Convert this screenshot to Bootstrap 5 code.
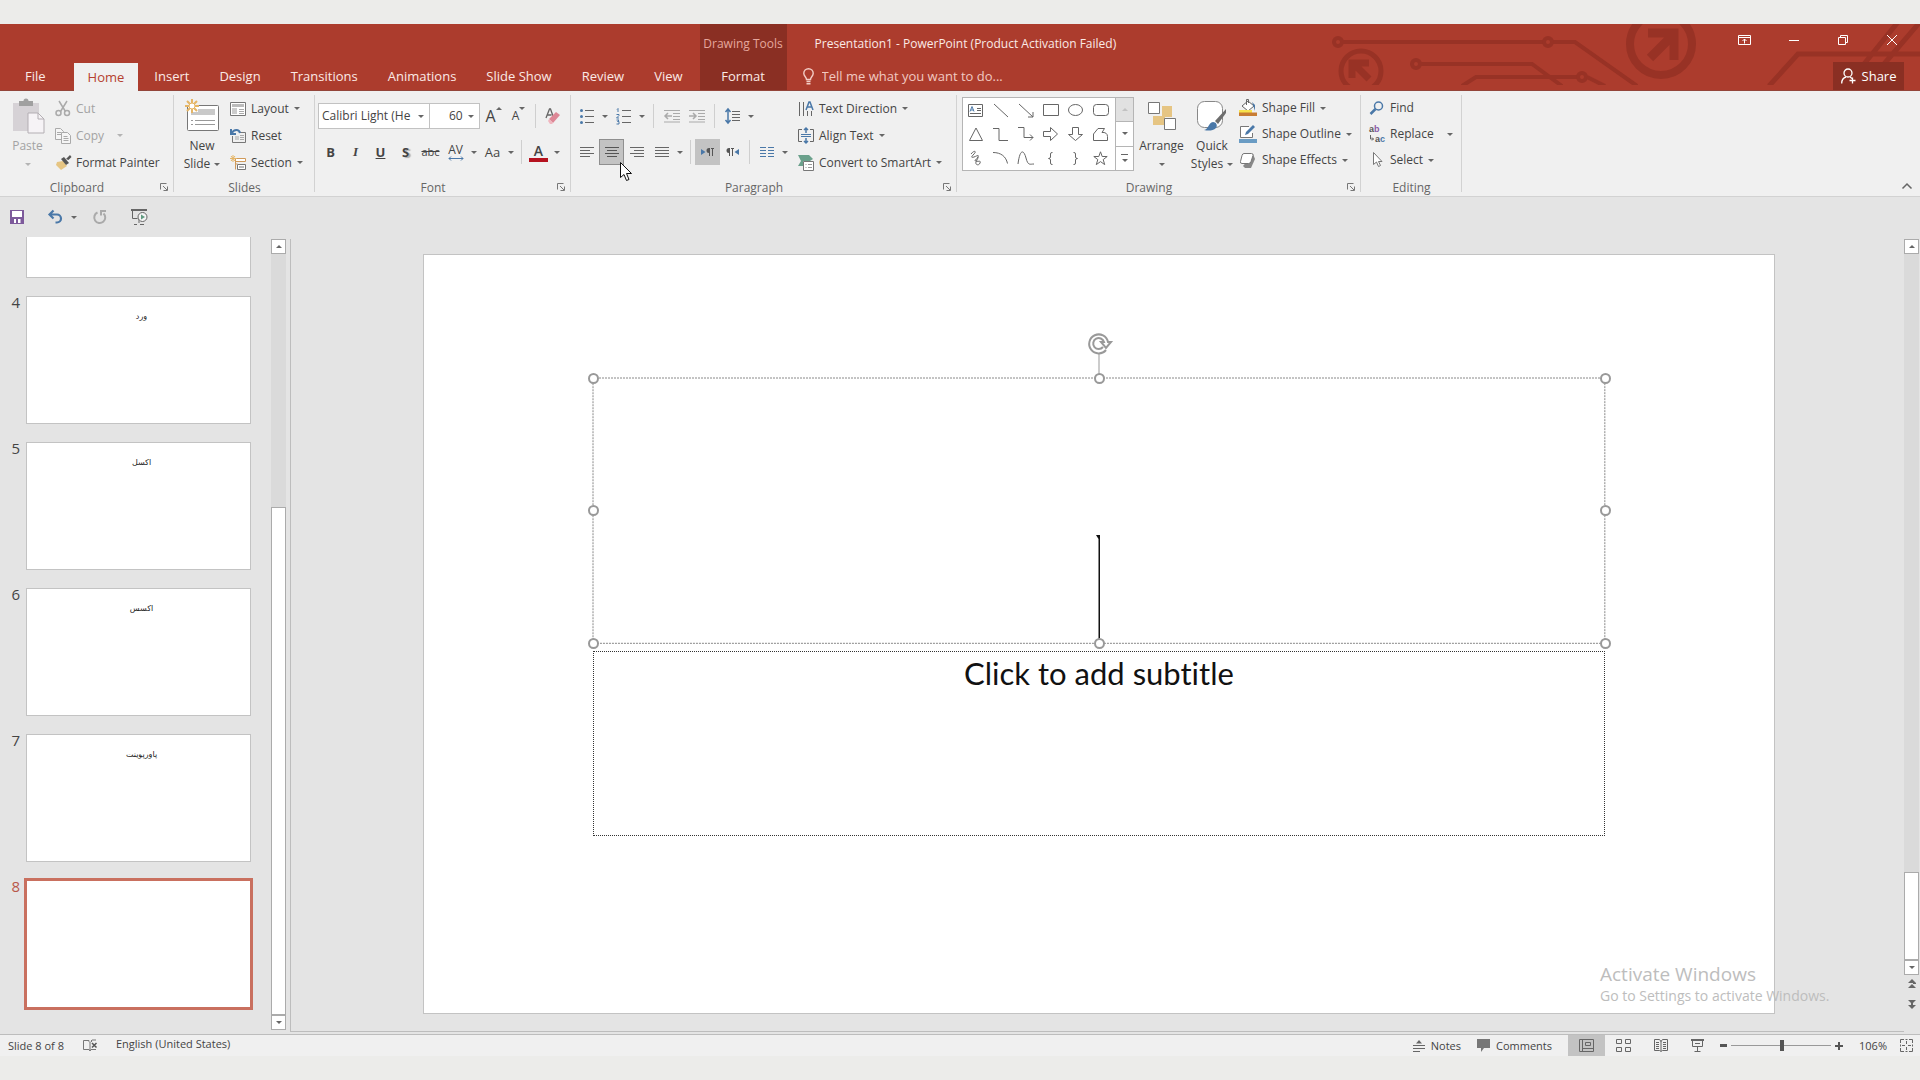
<!DOCTYPE html>
<html lang="en">
<head>
<meta charset="utf-8">
<meta name="viewport" content="width=device-width, initial-scale=1">
<title>Presentation1 - PowerPoint</title>
<link href="https://cdn.jsdelivr.net/npm/bootstrap@5.3.0/dist/css/bootstrap.min.css" rel="stylesheet">
<style>
:root{--brand:#ac3c2d;--brand-dark:#8a2f23;--art:#983225;--ink:#444;--line:#d2d2d2;--panel:#e4e4e4}
body{font-family:"Open Sans","Noto Sans",sans-serif;font-size:12px;line-height:16px;color:var(--ink);background:#ececea;overflow:hidden}
.app{height:100vh;padding:24px 0}
.titlebar,.ribbon,.qat,.status{flex:none}
svg{display:block;flex:none;overflow:visible}
a{color:inherit;text-decoration:none}
.rbtn{--bs-btn-padding-x:0;--bs-btn-padding-y:0;--bs-btn-font-size:12px;--bs-btn-line-height:18px;--bs-btn-border-width:0;--bs-btn-border-radius:0;--bs-btn-color:var(--ink);--bs-btn-disabled-color:#a3a3a3;--bs-btn-disabled-opacity:1;display:flex;align-items:center;font-family:inherit;white-space:nowrap}
.tri{display:inline-block;border:3px solid transparent;border-top-color:#666;border-bottom-width:0;flex:none}
.tri.up{border-top-width:0;border-bottom:3px solid #666}
.tri.dim{border-top-color:#b4b4b4}

/* title bar */
.titlebar{background:var(--brand);color:#fbeae6;height:67px;border-bottom:1px solid #93453a}
.titlebar .art{right:0;top:0}
.tabs{font-size:13px;line-height:28px;padding-right:2px}
.tabs a{padding:0 15px}
.tabs a.file-tab{padding:0 28px 0 25px}
.tabs a.on{background:#f0f0f0;color:#b5402f;padding:0 14px;margin:0 1px -1px 0}
.ctx{background:var(--brand-dark);width:87px;text-align:center}
.ctx-name{color:#e6a79d;line-height:39px}
.ctx-tab{font-size:13px;line-height:27px}
.doc-title{line-height:39px;height:38px;padding-left:28px}
.tell{line-height:28px;padding-left:16px;gap:8px;color:#f3cdc6}
.tell input{background:none;border:0;outline:0;padding:0;color:inherit;font-size:13px;width:220px}
.tell input::placeholder{color:#f1c9c1;opacity:1}
.wbtn{width:49px;height:32px;justify-content:center}
.share{background:var(--brand-dark);height:28px;width:71px;gap:6px;margin-right:16px;--bs-btn-color:#fff;--bs-btn-font-size:13px;justify-content:center}

/* ribbon */
.ribbon{background:#f0f0f0;height:106px;padding-top:4px;border-bottom:1px solid var(--line)}
.grp{position:relative;flex:none}
.grp::after{content:"";position:absolute;right:0;top:0;bottom:4px;width:1px;background:var(--line)}
.grp-body{height:85px}
.grp-foot{height:16px;text-align:center;color:#666;padding-right:20px}
.grp-foot.full{padding-right:0}
.launch{position:absolute;right:6px;bottom:5px}
.g-clip{width:174px}.g-slides{width:141px}.g-font{width:256px}.g-para{width:386px}.g-draw{width:404px}.g-edit{width:101px}
.stack .rbtn{height:27px;gap:5px}
.stack.tight .rbtn{height:26px}
.big{flex-direction:column}
.big .pic{height:42px;display:flex;align-items:center;justify-content:center}
.w-paste{width:55px}.w-new{width:56px}.w-arr{width:55px}.w-quick{width:46px}
.rows{padding:8px 0 0 3px}
.rows>div{height:26px;margin-bottom:10px}
.rows.para{width:227px}
.ic{width:25px;height:26px;justify-content:center}
.dd{width:12px;height:26px;justify-content:center}
.vsep{width:1px;height:24px;background:#cfcfcf;margin:0 4px}
.roomy .vsep{margin:0 5px}
.pressed{background:#c3c3c3}
.pressed.ring{box-shadow:inset 0 0 0 1px #8f8f8f}
.pick{appearance:none;border:1px solid #c2c2c2;border-radius:0;height:26px;font-size:12px;color:#444;padding:0 0 0 3px;background:#fff url("data:image/svg+xml,%3Csvg xmlns='http://www.w3.org/2000/svg' width='6' height='3'%3E%3Cpath d='M0 0h6L3 3z' fill='%23666'/%3E%3C/svg%3E") no-repeat right 5px center}
.pick.face{width:112px}.pick.size{width:51px;margin:0 1px 0 -1px;padding-left:19px}
.glyph{font-weight:700;font-size:13px}
.gallery{border:1px solid #b5b5b5;background:#fff;height:74px;margin:2px 0 0 5px}
.gallery .cells{display:grid;grid-template-columns:repeat(6,25px);grid-auto-rows:24px;padding-right:2px}
.gallery .cells .rbtn{justify-content:center}
.gallery .nav-col{width:18px;border-left:1px solid #b5b5b5}
.gallery .nav-col .rbtn{justify-content:center;flex:1}
.gallery .nav-col .rbtn+.rbtn{border-top:1px solid #b5b5b5}
.swap{font:600 9px "Liberation Sans",sans-serif}

/* workspace */
.qat{background:var(--panel);height:40px;padding-left:10px}
.work{background:var(--panel);min-height:0}
.thumbs{width:271px;overflow:hidden;justify-content:flex-end;padding-bottom:26px;gap:18px}
.thumb-row{flex:none}
.thumb-no{width:26px;padding:0 6px 0 0;text-align:right;font-size:15px;line-height:12px}
.thumb{width:225px;height:128px;background:#fff;border:1px solid #c3c3c3;text-align:center;font-family:"DejaVu Sans",sans-serif;font-size:8px;line-height:12px;color:#222;padding:14px 0 0 6px;flex:none}
.current .thumb{outline:3px solid #c9705f;outline-offset:-1px;border-color:#fff}
.current .thumb-no{color:#b85749}
.vbar{width:15px;margin-top:2px}
.vbar.at-edge{margin-right:1px}
.vbar .sb{width:15px;height:15px;border:1px solid #ababab;background:#fff;justify-content:center}
.vbar .track{background:#dadada}
.vbar .knob{background:#fff;border:1px solid #ababab}
.pager{height:59px}
.split{width:1px;background:#bdbdbd;margin:2px 0 2px 4px}
.stage{padding:17px 0 17px 3px;border-bottom:1px solid #bdbdbd;margin-bottom:2px;min-width:0}
.slide{height:100%;aspect-ratio:16/9;background:#fff;border:1px solid #c3c3c3;position:relative}
.ph{position:absolute;left:12.5%;width:75%}
.ph-title{top:16.2%;height:35%}
.ph-title .edge{position:absolute;inset:0;width:100%;height:100%}
.ph-sub{top:52.3%;height:24.4%;border:1px dotted #333;text-align:center;font-family:Lato,sans-serif;font-size:31px;line-height:42px;font-variant-ligatures:none;color:#111}
.knot{position:absolute;width:11px;height:11px;margin:-5px;border:2px solid #999;border-radius:50%;background:#fff}
.l{left:0}.c{left:50%}.r{left:100%}.t{top:0}.m{top:50%}.b{top:100%}
.rotor{position:absolute;left:50%;top:-46px;margin-left:-11px}
.beam{position:absolute;left:50%;bottom:0;margin-left:-3px}
.watermark{position:absolute;left:1600px;bottom:73px;color:#bdbdbd;font-size:14px;line-height:22px;pointer-events:none}
.watermark div:first-child{font-size:19px}
.pointer{position:absolute;left:620px;top:162px;pointer-events:none}

/* status bar */
.status{background:#f0f0f0;height:22px;border-top:1px solid #bdbdbd;font-size:11px;line-height:18px}
.status .rbtn{--bs-btn-font-size:11px;height:21px;gap:6px}
.status .lang{gap:18px;margin-left:19px}
.status .fit{margin:0 7px 0 13px}
.view{width:37px;justify-content:center}
.zoom{appearance:none;width:100px;height:16px;background:linear-gradient(#999,#999) center/100% 1px no-repeat;margin:0 4px}
.zoom::-webkit-slider-thumb{appearance:none;width:4px;height:11px;background:#555}
</style>
</head>
<body>
<div class="app d-flex flex-column">

<header class="titlebar d-flex position-relative">
  <svg class="art position-absolute overflow-hidden" width="600" height="61" viewBox="1320 24 600 61" fill="none" stroke="#983225" stroke-width="4">
    <circle cx="1338" cy="42" r="4"/><path d="M1343 42h200M1553 42h22l62 44"/><circle cx="1548" cy="42" r="4"/>
    <circle cx="1416" cy="64" r="4"/><path d="M1421 64h111l30 22M1462 86l14-9h101"/><circle cx="1582" cy="77" r="4"/><path d="M1587 77l18 9"/>
    <circle cx="1361" cy="71" r="20" stroke-width="5"/><path d="M1369 79l-13-13M1352 78v-15h17" stroke-width="7"/>
    <circle cx="1661" cy="44" r="31" stroke-width="8"/><path d="M1650 58l20-20M1648 33h26v27" stroke-width="9"/>
    <path d="M1769 86l29-32h122M1864 64l34-42M1884 64l36-42" stroke-width="5"/>
  </svg>
  <nav class="tabs d-flex align-items-end">
    <a class="file-tab" href="#">File</a><a class="on" href="#">Home</a><a href="#">Insert</a><a href="#">Design</a><a href="#">Transitions</a><a href="#">Animations</a><a href="#">Slide Show</a><a href="#">Review</a><a href="#">View</a>
  </nav>
  <div class="ctx d-flex flex-column">
    <div class="ctx-name">Drawing Tools</div>
    <a class="ctx-tab" href="#">Format</a>
  </div>
  <div class="flex-grow-1">
    <div class="doc-title">Presentation1 - PowerPoint (Product Activation Failed)</div>
    <label class="tell d-flex align-items-center">
      <svg width="11" height="17" viewBox="0 0 11 17" fill="none" stroke="#f3cdc6" stroke-width="1.4"><path d="M3.5 11.5C3.5 9 .8 8.400.8 5.200A4.700 4.500 0 0 1 10.200 5.200C10.200 8.400 7.500 9 7.500 11.500zM3.500 13.500h4M3.500 15.800h4"/></svg>
      <input type="text" placeholder="Tell me what you want to do..." aria-label="Tell me what you want to do">
    </label>
  </div>
  <div class="position-relative d-flex flex-column align-items-end justify-content-between">
    <div class="d-flex">
      <button class="btn rbtn wbtn" aria-label="Ribbon display options"><svg width="13" height="10" fill="none" stroke="#fff" stroke-width="1"><path d="M.5.5h12v9H.5zM.5 2.500h12M6.500 8.500v-4.500M4.500 6l2-2 2 2"/></svg></button>
      <button class="btn rbtn wbtn" aria-label="Minimize"><svg width="10" height="10" stroke="#fff"><path d="M0 5.500h10"/></svg></button>
      <button class="btn rbtn wbtn" aria-label="Restore"><svg width="10" height="10" fill="none" stroke="#fff"><path d="M.5 2.500h7v7h-7zM2.500 2.500v-2h7v7h-2"/></svg></button>
      <button class="btn rbtn wbtn me-1" aria-label="Close"><svg width="10" height="10" stroke="#fff"><path d="M0 0l10 10M10 0L0 10"/></svg></button>
    </div>
    <button class="btn rbtn share"><svg width="15" height="16" fill="none" stroke="#fff" stroke-width="1.300"><circle cx="7" cy="5" r="4"/><path d="M.7 15.500C.7 11.500 3 9.500 5 9M9 9l2 1.500M11.500 9.500v6M8.500 12.500h6"/></svg>Share</button>
  </div>
</header>

<section class="ribbon d-flex position-relative">
  <div class="grp g-clip">
    <div class="grp-body d-flex">
      <button class="btn rbtn big w-paste" disabled>
        <span class="pic"><svg width="32" height="36" viewBox="0 0 32 36"><path d="M1 5h26v28H1z" fill="#d6d2d6"/><path d="M7 8V3h4.500a2.500 2.500 0 0 1 5 0H21v5z" fill="#a0a0a0"/><path d="M16 15h10l6 6v14H16z" fill="#f6f3f6" stroke="#b3aeb3"/><path d="M26 15v6h6" fill="none" stroke="#b3aeb3"/></svg></span>
        Paste<span class="tri dim mt-2"></span>
      </button>
      <div class="stack">
        <button class="btn rbtn" disabled><svg width="16" height="16" fill="none" stroke="#aaa" stroke-width="1.500"><path d="M4 0l6.500 10.500M12 0L5.500 10.500"/><circle cx="3.500" cy="12" r="2.500"/><circle cx="12" cy="12" r="2.500"/></svg>Cut</button>
        <button class="btn rbtn" disabled><svg width="16" height="16" fill="#f5f5f5" stroke="#aaa"><path d="M.5.500h5l3 3v8h-8zM2 4.500h4M2 6.500h5"/><path d="M6.500 4.500h6l3 3v8h-9zM8.500 8.500h4M8.500 10.500h5M8.500 12.500h5"/></svg>Copy<span class="tri dim ms-2"></span></button>
        <button class="btn rbtn"><svg width="16" height="16"><path d="M2 7l6-1 4 5-6 4-2-2-3-3z" fill="#e6c583"/><path d="M6 4l3-2 5 6-3 2z" fill="#555"/><path d="M11 4l4-4 1.500 2-3 3z" fill="#555"/></svg>Format Painter</button>
      </div>
    </div>
    <div class="grp-foot">Clipboard</div>
    <svg class="launch" width="8" height="8" fill="none" stroke="#777"><path d="M.5 6.500v-6h6M3 3l4 4M7.500 3.500v4h-4"/></svg>
  </div>

  <div class="grp g-slides">
    <div class="grp-body d-flex">
      <button class="btn rbtn big w-new">
        <span class="pic"><svg width="34" height="34" viewBox="0 0 34 34"><rect x="2.500" y="6.500" width="31" height="25" rx="1" fill="#fff" stroke="#777"/><path d="M13 10h17v6H6v-3h7z" fill="#c9c9c9"/><path d="M6 21.500h2M10 21.500h20M6 25.500h2M10 25.500h20" stroke="#999"/><path d="M7 0v14M0 7h14M2 2l10 10M12 2L2 12" stroke="#e5b565" stroke-width="2"/><circle cx="7" cy="7" r="3" fill="#fff" stroke="#e5b565"/></svg></span>
        New<span class="d-flex align-items-center gap-1">Slide<span class="tri"></span></span>
      </button>
      <div class="stack">
        <button class="btn rbtn"><svg width="16" height="14" fill="#fff" stroke="#777"><path d="M.5.500h15v13H.5z"/><path d="M2 3.500h12" stroke="#bbb" stroke-width="3"/><path d="M2 6h5v6H2z" fill="#ccc" stroke="none"/><path d="M9 7.500h5M9 9.500h5M9 11.500h5" stroke="#aaa"/></svg>Layout<span class="tri"></span></button>
        <button class="btn rbtn"><svg width="16" height="16" fill="none" stroke="#777"><path d="M9 4.500h6.500v10h-13V8"/><path d="M5 8h4v4H5z" fill="#ccc" stroke="none"/><path d="M10 7.500h4M10 9.500h4M10 11.500h4" stroke="#aaa"/><path d="M1 1v5h5M1.500 5.500C4 1 9 1 10 5" stroke="#4a78a8" stroke-width="2"/></svg>Reset</button>
        <button class="btn rbtn"><svg width="16" height="16" fill="#fff" stroke="#777"><path d="M7.500 9.500h8v5h-8zM9 12h5" /><path d="M5.500 3.500h10v3h-10z" fill="#fff" stroke="#d09a5a"/><path d="M5.500 4.500v10M5.500 9h2" stroke="#d09a5a"/><path d="M3 0v7M0 3.500h7M1 1l4 5M5 1L1 6" stroke="#e5b565"/></svg>Section<span class="tri"></span></button>
      </div>
    </div>
    <div class="grp-foot full">Slides</div>
  </div>

  <div class="grp g-font">
    <div class="grp-body rows">
      <div class="d-flex align-items-center">
        <select class="pick face" aria-label="Font"><option>Calibri Light (He</option></select>
        <select class="pick size" aria-label="Font size"><option>60</option></select>
        <button class="btn rbtn ic fs-6" aria-label="Increase font size">A<span class="tri up mb-3"></span></button>
        <button class="btn rbtn ic" aria-label="Decrease font size">A<span class="tri mb-3"></span></button>
        <span class="vsep"></span>
        <button class="btn rbtn ic" aria-label="Clear formatting"><svg width="15" height="16"><path d="M1 10L4.500 1h1L8 8M2.500 7h4" fill="none" stroke="#666" stroke-width="1.300"/><path d="M4 11l7-7 4 3-7 8z" fill="#dd8796"/><path d="M4 11l4 4-1 1H5l-2-3z" fill="#f0b6bf"/></svg></button>
      </div>
      <div class="d-flex align-items-center">
        <button class="btn rbtn ic glyph">B</button>
        <button class="btn rbtn ic glyph fst-italic" style="font-family:'Liberation Serif',serif">I</button>
        <button class="btn rbtn ic glyph text-decoration-underline">U</button>
        <button class="btn rbtn ic glyph" style="text-shadow:2px 1px 1px #aaa">S</button>
        <button class="btn rbtn ic text-decoration-line-through" style="--bs-btn-font-size:11px">abc</button>
        <button class="btn rbtn ic flex-column" aria-label="Character spacing"><span style="line-height:12px">AV</span><svg width="16" height="5" fill="none" stroke="#4a78a8"><path d="M1 2.500h14M3 .500l-2 2 2 2M13 .500l2 2-2 2"/></svg></button>
        <button class="btn rbtn dd" aria-label="Spacing options"><span class="tri"></span></button>
        <button class="btn rbtn ic" style="--bs-btn-font-size:13px">Aa</button>
        <button class="btn rbtn dd" aria-label="Case options"><span class="tri"></span></button>
        <span class="vsep"></span>
        <button class="btn rbtn ic flex-column" aria-label="Font color"><span style="font-size:14px;line-height:15px;font-weight:600">A</span><span style="width:19px;height:4px;background:#b5121f"></span></button>
        <button class="btn rbtn dd" aria-label="Color options"><span class="tri"></span></button>
      </div>
    </div>
    <div class="grp-foot">Font</div>
    <svg class="launch" width="8" height="8" fill="none" stroke="#777"><path d="M.5 6.500v-6h6M3 3l4 4M7.500 3.500v4h-4"/></svg>
  </div>

  <div class="grp g-para">
    <div class="grp-body d-flex">
      <div class="rows para">
        <div class="d-flex align-items-center roomy">
          <button class="btn rbtn ic" aria-label="Bullets"><svg width="14" height="16" stroke="#666"><path d="M5 2.500h9M5 8.500h9M5 14.500h9"/><g fill="#4a78a8" stroke="none"><circle cx="1.500" cy="2.500" r="1.500"/><circle cx="1.500" cy="8.500" r="1.500"/><circle cx="1.500" cy="14.500" r="1.500"/></g></svg></button>
          <button class="btn rbtn dd" aria-label="Bullet options"><span class="tri"></span></button>
          <button class="btn rbtn ic" aria-label="Numbering"><svg width="15" height="16" fill="none" stroke="#666"><path d="M6 2.500h9M6 8.500h9M6 14.500h9"/><path d="M1 1.500l1-1V4M.5 6.500h2.500v1l-2.500 2.500H3M.5 12h2.500l-1.500 1.500h1.500V16H.5" stroke="#4a78a8"/></svg></button>
          <button class="btn rbtn dd" aria-label="Numbering options"><span class="tri"></span></button>
          <span class="vsep"></span>
          <button class="btn rbtn ic" disabled aria-label="Decrease indent"><svg width="16" height="14" stroke="#aaa" fill="none"><path d="M0 1.500h16M9 4.500h7M9 7.500h7M9 10.500h7M0 13h16"/><path d="M1 7h7M4 4L1 7l3 3" stroke-width="1.500"/></svg></button>
          <button class="btn rbtn ic" disabled aria-label="Increase indent"><svg width="16" height="14" stroke="#aaa" fill="none"><path d="M0 1.500h16M9 4.500h7M9 7.500h7M9 10.500h7M0 13h16"/><path d="M0 7h7M4 4l3 3-3 3" stroke-width="1.500"/></svg></button>
          <span class="vsep"></span>
          <button class="btn rbtn ic" aria-label="Line spacing"><svg width="15" height="16" fill="none" stroke="#666"><path d="M7 3.500h8M7 6.500h8M7 9.500h8M7 12.500h8"/><path d="M3 1v14M.5 4L3 1l2.500 3M.5 12L3 15l2.500-3" stroke="#4a78a8" stroke-width="1.500"/></svg></button>
          <button class="btn rbtn dd" aria-label="Line spacing options"><span class="tri"></span></button>
        </div>
        <div class="d-flex align-items-center">
          <button class="btn rbtn ic" aria-label="Align left"><svg width="14" height="11" stroke="#666"><path d="M0 .500h14M0 3.500h10M0 6.500h14M0 9.500h10"/></svg></button>
          <button class="btn rbtn ic pressed ring" aria-label="Center"><svg width="14" height="11" stroke="#555"><path d="M0 .500h14M2 3.500h10M0 6.500h14M2 9.500h10"/></svg></button>
          <button class="btn rbtn ic" aria-label="Align right"><svg width="14" height="11" stroke="#666"><path d="M0 .500h14M4 3.500h10M0 6.500h14M4 9.500h10"/></svg></button>
          <button class="btn rbtn ic" aria-label="Justify"><svg width="14" height="11" stroke="#666"><path d="M0 .500h14M0 3.500h14M0 6.500h14M0 9.500h14"/></svg></button>
          <button class="btn rbtn dd" aria-label="Justify options"><span class="tri"></span></button>
          <span class="vsep"></span>
          <button class="btn rbtn ic pressed" aria-label="Left to right"><svg width="13" height="9"><path d="M0 1l4.500 3L0 7z" fill="#4a78a8"/><path d="M9 0H8a2.500 2.500 0 0 0 0 5v3h1zM10 0h3v1h-1v7h-1V1h-1z" fill="#555"/></svg></button>
          <button class="btn rbtn ic" aria-label="Right to left"><svg width="13" height="9"><path d="M13 1L8.500 4l4.500 3z" fill="#4a78a8"/><path d="M4 0H3a2.500 2.500 0 0 0 0 5v3h1zM5 0h3v1H7v7H6V1H5z" fill="#555"/></svg></button>
          <span class="vsep"></span>
          <button class="btn rbtn ic" aria-label="Columns"><svg width="14" height="11" stroke="#4a78a8"><path d="M0 .500h6M8 .500h6M0 3.500h6M8 3.500h6M0 6.500h6M8 6.500h6M0 9.500h6M8 9.500h6"/></svg></button>
          <button class="btn rbtn dd" aria-label="Column options"><span class="tri"></span></button>
        </div>
      </div>
      <div class="stack">
        <button class="btn rbtn"><svg width="16" height="16" fill="none" stroke="#666"><path d="M1.500 1v14M5.500 1v14M9.500 10v5M13.500 10v5"/><path d="M8 9l3-8h1l3 8M9.500 6h4.500" stroke="#4a78a8" stroke-width="1.500"/></svg>Text Direction<span class="tri"></span></button>
        <button class="btn rbtn"><svg width="16" height="16" fill="none" stroke="#666"><path d="M4 1.500H.500v12H4M12 1.500h3.500v12H12"/><path d="M8 0v5M6 2l2-2 2 2M8 15v-5M6 13l2 2 2-2" stroke="#4a78a8" stroke-width="1.500"/><path d="M3 6.500h10M3 8.500h10" stroke="#4a78a8"/></svg>Align Text<span class="tri"></span></button>
        <button class="btn rbtn"><svg width="16" height="16"><path d="M0 0h11l4 4-3 2H5v5H0l3-5z" fill="#6ba18c"/><path d="M5.500 6.500h10v9h-10z" fill="#fff" stroke="#777"/><path d="M7.500 9.500h1M10 9.500h4M7.500 12.500h1M10 12.500h4" stroke="#999"/></svg>Convert to SmartArt<span class="tri"></span></button>
      </div>
    </div>
    <div class="grp-foot">Paragraph</div>
    <svg class="launch" width="8" height="8" fill="none" stroke="#777"><path d="M.5 6.500v-6h6M3 3l4 4M7.500 3.500v4h-4"/></svg>
  </div>

  <div class="grp g-draw">
    <div class="grp-body d-flex">
      <div class="gallery d-flex">
        <div class="cells">
          <button class="btn rbtn" aria-label="Text box"><svg width="15" height="13" fill="none" stroke="#666"><path d="M.5.500h14v12H.5zM9 4.500h4M9 6.500h4M2 9.500h11"/><path d="M2 7.500l2-5 2 5M3 6h2.500" stroke="#4a78a8"/></svg></button>
          <button class="btn rbtn" aria-label="Line"><svg width="14" height="13" stroke="#666"><path d="M0 0l14 13"/></svg></button>
          <button class="btn rbtn" aria-label="Arrow line"><svg width="14" height="13" fill="none" stroke="#666"><path d="M0 0l14 13M14 8v5H9"/></svg></button>
          <button class="btn rbtn" aria-label="Rectangle"><svg width="16" height="12" fill="none" stroke="#666"><path d="M.5.500h15v11H.5z"/></svg></button>
          <button class="btn rbtn" aria-label="Oval"><svg width="15" height="12" fill="none" stroke="#666"><ellipse cx="7.500" cy="6" rx="7" ry="5.500"/></svg></button>
          <button class="btn rbtn" aria-label="Rounded rectangle"><svg width="16" height="12" fill="none" stroke="#666"><rect x=".5" y=".5" width="15" height="11" rx="3"/></svg></button>
          <button class="btn rbtn" aria-label="Triangle"><svg width="14" height="14" fill="none" stroke="#666"><path d="M7 1l6.500 12.500H.500z"/></svg></button>
          <button class="btn rbtn" aria-label="Elbow connector"><svg width="15" height="13" fill="none" stroke="#666"><path d="M0 .500h6v12h9"/></svg></button>
          <button class="btn rbtn" aria-label="Elbow arrow"><svg width="15" height="14" fill="none" stroke="#666"><path d="M0 .500h6v10h9M12 7.500l3 3-3 3"/></svg></button>
          <button class="btn rbtn" aria-label="Right arrow"><svg width="15" height="14" fill="none" stroke="#666"><path d="M.5 4.500h7v-4l7 6.500-7 6.500v-4h-7z"/></svg></button>
          <button class="btn rbtn" aria-label="Down arrow"><svg width="15" height="14" fill="none" stroke="#666"><path d="M4.500.500v7h-4l7 6 7-6h-4v-7z"/></svg></button>
          <button class="btn rbtn" aria-label="Freeform"><svg width="15" height="13" fill="none" stroke="#666"><path d="M.5 12.500V6L5 .500h6.500L9 4.500c3-.5 5.500 1 5.500 4v4z"/></svg></button>
          <button class="btn rbtn" aria-label="Scribble"><svg width="12" height="14" fill="none" stroke="#666"><path d="M1 3C4-1 7 0 4 3S1 7 4 6s5-3 4 0-5 3-2 4 5-1 4 2-5 2-4-1 2-3 2-5"/></svg></button>
          <button class="btn rbtn" aria-label="Arc"><svg width="15" height="12" fill="none" stroke="#666"><path d="M0 .500c8 0 13 4 14.500 11"/></svg></button>
          <button class="btn rbtn" aria-label="Curve"><svg width="16" height="13" fill="none" stroke="#666"><path d="M0 12C2-4 6-2 8 6s4 6 8 6"/></svg></button>
          <button class="btn rbtn" aria-label="Left brace"><svg width="5" height="13" fill="none" stroke="#666"><path d="M4.500.500H4Q2.500.500 2.500 2v3Q2.500 6.500.500 6.500q2 0 2 1.500v3q0 1.500 1.500 1.500h.5"/></svg></button>
          <button class="btn rbtn" aria-label="Right brace"><svg width="5" height="13" fill="none" stroke="#666"><path d="M.5.500H1Q2.500.500 2.500 2v3q0 1.500 2 1.500-2 0-2 1.500v3q0 1.500-1.500 1.500H.5"/></svg></button>
          <button class="btn rbtn" aria-label="Star"><svg width="15" height="14" fill="none" stroke="#666"><path d="M7.500.800l1.700 4.700h5l-4 3.100 1.500 5-4.200-3-4.200 3 1.500-5-4-3.100h5z"/></svg></button>
        </div>
        <div class="nav-col d-flex flex-column">
          <button class="btn rbtn" disabled style="background:#e1e1e1" aria-label="Scroll up"><span class="tri up opacity-25"></span></button>
          <button class="btn rbtn" aria-label="Scroll down"><span class="tri"></span></button>
          <button class="btn rbtn flex-column gap-1" aria-label="More shapes"><span style="width:7px;height:1px;background:#666"></span><span class="tri"></span></button>
        </div>
      </div>
      <button class="btn rbtn big w-arr">
        <span class="pic"><svg width="28" height="28"><path d="M14 4h10v11h-7v8H5V14h9z" fill="#e6c583"/><path d="M.5.500h11v11H.5zM16.500 16.500h11v11h-11z" fill="#fff" stroke="#777"/></svg></span>
        Arrange<span class="tri mt-2"></span>
      </button>
      <button class="btn rbtn big w-quick">
        <span class="pic"><svg width="30" height="30"><rect x=".5" y=".5" width="25" height="26" rx="7" fill="#fff" stroke="#888"/><path d="M29 8L18 20l3 3 8-11z" fill="#6d6d6d"/><path d="M7 29c5-1 4-7 9-8 3 0 5 3 3 6-3 3-8 3-12 2z" fill="#4a78a8"/></svg></span>
        Quick<span class="d-flex align-items-center gap-1">Styles<span class="tri"></span></span>
      </button>
      <div class="stack tight ps-1">
        <button class="btn rbtn"><svg width="18" height="18"><path d="M3 7l6-5 6 5-6 5z" fill="#fff" stroke="#666"/><path d="M7.500 6V.500h2V4" fill="none" stroke="#666"/><path d="M13 3l3 3v6z" fill="#4a78a8"/><path d="M0 11h13v3H0z" fill="#f8e34c"/><path d="M0 13.500h18V17H0z" fill="#c87d34"/></svg>Shape Fill<span class="tri"></span></button>
        <button class="btn rbtn"><svg width="18" height="18"><path d="M10 1.500H1.500v11h12V8" fill="#fff" stroke="#777"/><path d="M6 10l1-3 7-7 2 2-7 7z" fill="#4a78a8"/><path d="M0 14h18v4H0z" fill="#6a9cc4"/></svg>Shape Outline<span class="tri"></span></button>
        <button class="btn rbtn"><svg width="18" height="16"><path d="M4 14l2 2h6l4-9-2-5z" fill="#888"/><path d="M5 1.500h7.500q2 0 1.500 2l-2 6q-.5 2-2.500 2H3q-2 0-1.500-2l1.500-6q.5-2 2-2z" fill="#fff" stroke="#777"/></svg>Shape Effects<span class="tri"></span></button>
      </div>
    </div>
    <div class="grp-foot">Drawing</div>
    <svg class="launch" width="8" height="8" fill="none" stroke="#777"><path d="M.5 6.500v-6h6M3 3l4 4M7.500 3.500v4h-4"/></svg>
  </div>

  <div class="grp g-edit">
    <div class="grp-body d-flex ps-2">
      <div class="stack tight">
        <button class="btn rbtn"><svg width="16" height="14" fill="none" stroke="#4a78a8"><circle cx="9.500" cy="5" r="4" stroke-width="1.500"/><path d="M6.500 8L1.500 13" stroke-width="2.500"/></svg>Find</button>
        <button class="btn rbtn"><svg class="swap" width="16" height="18" fill="#555"><text x="0" y="7">a<tspan fill="#8a5aa5">b</tspan></text><text x="6" y="17">a<tspan fill="#4a78a8">c</tspan></text><path d="M1.500 10v4h3M3 12.500L4.500 14 3 15.500" fill="none" stroke="#666"/></svg>Replace<span class="tri ms-2"></span></button>
        <button class="btn rbtn"><svg width="16" height="16" fill="#fff" stroke="#777"><path d="M4.500.500v12l3-2.500 2 4.500 2-1-2-4h3.500z"/></svg>Select<span class="tri"></span></button>
      </div>
    </div>
    <div class="grp-foot full">Editing</div>
  </div>
  <button class="btn rbtn ms-auto align-self-end me-2" style="height:20px" aria-label="Collapse ribbon"><svg width="10" height="6" fill="none" stroke="#666" stroke-width="1.500"><path d="M.5 5.500L5 1l4.500 4.500"/></svg></button>
</section>

<div class="qat d-flex align-items-center">
  <button class="btn rbtn" aria-label="Save"><svg width="14" height="14"><path d="M0 0h14v14H0z" fill="#7d5a9b"/><path d="M2 1h10v6H2zM4 9h2v4H4zM8 9h2.500v4H8z" fill="#fff"/></svg></button>
  <button class="btn rbtn ms-4 gap-2" aria-label="Undo"><svg width="15" height="14" fill="none" stroke="#4a78a8" stroke-width="2.200"><path d="M5.500.500L1.500 4.500l4 4M2 4.500h7a4 4 0 0 1 0 8H7.500"/></svg><span class="tri"></span></button>
  <button class="btn rbtn ms-3" disabled aria-label="Redo"><svg width="14" height="14" fill="none" stroke="#aaa" stroke-width="2"><path d="M4.500 2.500a5.500 5.500 0 1 0 6 1M8 5.500V1h5"/></svg></button>
  <button class="btn rbtn ms-4" aria-label="Start from beginning"><svg width="17" height="16" fill="none" stroke="#666"><path d="M0 1h16" stroke-width="2"/><path d="M1.500 2v7.500h5M8 9v5M3 15.500h3M9 15.500h4"/><circle cx="11.500" cy="8" r="4.500" fill="#f4f4f4"/><path d="M10 5.500v5l4-2.500z" fill="#5f9a80" stroke="none"/></svg></button>
</div>

<main class="work d-flex flex-grow-1">
  <aside class="thumbs d-flex flex-column">
    <div class="thumb-row d-flex"><span class="thumb-no"></span><div class="thumb"></div></div>
    <div class="thumb-row d-flex"><span class="thumb-no">4</span><div class="thumb" lang="fa" dir="rtl">ورد</div></div>
    <div class="thumb-row d-flex"><span class="thumb-no">5</span><div class="thumb" lang="fa" dir="rtl">اکسل</div></div>
    <div class="thumb-row d-flex"><span class="thumb-no">6</span><div class="thumb" lang="fa" dir="rtl">اکسس</div></div>
    <div class="thumb-row d-flex"><span class="thumb-no">7</span><div class="thumb" lang="fa" dir="rtl">پاورپوینت</div></div>
    <div class="thumb-row d-flex current"><span class="thumb-no">8</span><div class="thumb"></div></div>
  </aside>
  <div class="vbar d-flex flex-column">
    <button class="btn rbtn sb" aria-label="Scroll up"><span class="tri up"></span></button>
    <div class="track flex-grow-1 d-flex flex-column justify-content-end"><div class="knob" style="height:66.700%"></div></div>
    <button class="btn rbtn sb mb-1" aria-label="Scroll down"><span class="tri"></span></button>
  </div>
  <div class="split"></div>
  <div class="stage flex-grow-1 d-flex justify-content-center">
    <div class="slide">
      <div class="ph ph-sub">Click to add subtitle</div>
      <div class="ph ph-title">
        <svg class="edge" fill="none" stroke="#888" stroke-dasharray="2 1"><rect width="100%" height="100%"/></svg>
        <svg class="rotor" width="26" height="46" fill="none" stroke="#999" stroke-width="2"><path d="M11 22v24" stroke-width="1"/><path d="M18 18a9.500 9.500 0 1 1 2-8h3l-5 6-5-6h3a5.500 5.500 0 1 0-1 5"/></svg>
        <svg class="beam" width="5" height="108"><path d="M0 0h4v108H2.500V4z" fill="#111"/></svg>
        <i class="knot l t"></i><i class="knot c t"></i><i class="knot r t"></i><i class="knot l m"></i><i class="knot r m"></i><i class="knot l b"></i><i class="knot c b"></i><i class="knot r b"></i>
      </div>
    </div>
  </div>
  <div class="vbar at-edge d-flex flex-column">
    <button class="btn rbtn sb" aria-label="Scroll up"><span class="tri up"></span></button>
    <div class="track flex-grow-1 d-flex flex-column justify-content-end"><div class="knob" style="height:12.400%"></div></div>
    <button class="btn rbtn sb" aria-label="Scroll down"><span class="tri"></span></button>
    <div class="pager d-flex flex-column align-items-center gap-2 pt-1">
      <svg width="8" height="9" fill="#666"><path d="M4 0l3.500 4H5v1h3V4zM0 4h8L4 0zM0 9h8L4 5z"/></svg>
      <svg class="mt-1" width="8" height="9" fill="#666"><path d="M0 0h8L4 4zM0 5h8L4 9zM3 3h2v3H3z"/></svg>
    </div>
  </div>
</main>

<footer class="status d-flex align-items-center">
  <span class="ps-2">Slide 8 of 8</span>
  <div class="lang d-flex">
    <button class="btn rbtn" aria-label="Spelling"><svg width="15" height="13" fill="none" stroke="#777"><path d="M9 2.500h-1l-1 1-1-1v-1H.500v9H6l1 1.500 1-1.500h5M7 3.500V12M8 2l1-1h4"/><path d="M9 4l4.500 4.500M13.500 4L9 8.500" stroke="#555" stroke-width="1.500"/></svg></button>
    <span>English (United States)</span>
  </div>
  <div class="ms-auto d-flex align-items-center">
    <button class="btn rbtn me-3"><svg width="12" height="12" fill="none" stroke="#666"><path d="M0 5.500h12M0 8.500h12M0 11.500h7"/><path d="M3 3.500L6 0l3 3.500z" fill="#666" stroke="none"/></svg>Notes</button>
    <button class="btn rbtn me-3"><svg width="13" height="13" fill="#777"><path d="M0 0h13v9H7l-3 4V9H0z"/></svg>Comments</button>
    <button class="btn rbtn view pressed" aria-label="Normal view"><svg width="15" height="13" fill="none" stroke="#666"><path d="M.5.500h14v12H.5zM3.500.500v12M3.500 9.500h11M6.500 3.500h5v3h-5z"/></svg></button>
    <button class="btn rbtn view" aria-label="Slide sorter"><svg width="15" height="13" fill="none" stroke="#666"><path d="M.5.500h5v4h-5zM9.500.500h5v4h-5zM.5 8.500h5v4h-5zM9.500 8.500h5v4h-5z"/></svg></button>
    <button class="btn rbtn view" aria-label="Reading view"><svg width="14" height="13" fill="none" stroke="#666"><path d="M7 2.500L5.500.500h-5v11h5l1.500 1 1.500-1h5V.500h-5zM7 2v10M2 3.500h3M2 5.500h3M2 7.500h3M2 9.500h3M9 3.500h3M9 5.500h3M9 7.500h3M9 9.500h3"/></svg></button>
    <button class="btn rbtn view" aria-label="Slide show"><svg width="13" height="13" fill="none" stroke="#666"><path d="M0 1h13" stroke-width="2"/><path d="M1.500 2v5.500h10V2M6.500 7.500v5M3.500 12.500h6M4 4.500h5"/></svg></button>
    <button class="btn rbtn ms-1" aria-label="Zoom out"><svg width="7" height="3"><path d="M0 0h7v3H0z" fill="#555"/></svg></button>
    <input class="zoom" type="range" min="0" max="100" value="51" aria-label="Zoom">
    <button class="btn rbtn" aria-label="Zoom in"><svg width="8" height="8" stroke="#555" stroke-width="2"><path d="M0 4h8M4 0v8"/></svg></button>
    <span class="ms-3">106%</span>
    <button class="btn rbtn fit" aria-label="Fit to window"><svg width="13" height="13" fill="none" stroke="#666"><path d="M.5 4V.5H4M9 .5h3.500V4M12.500 9v3.500H9M4 12.500H.5V9M5.500.5h2M12.500 5.500v2M7.500 12.500h-2M.5 7.500v-2"/><path d="M6.500 2v3M6.500 8v3M2 6.500h3M8 6.500h3"/></svg></button>
  </div>
</footer>
</div>

<div class="watermark"><div>Activate Windows</div><div>Go to Settings to activate Windows.</div></div>
<svg class="pointer" width="13" height="20" fill="#fff" stroke="#111"><path d="M.5.500v15l3.500-3 2.500 6 2.500-1-2.500-6h5z"/></svg>
<script src="https://cdn.jsdelivr.net/npm/bootstrap@5.3.0/dist/js/bootstrap.bundle.min.js"></script>
</body>
</html>
